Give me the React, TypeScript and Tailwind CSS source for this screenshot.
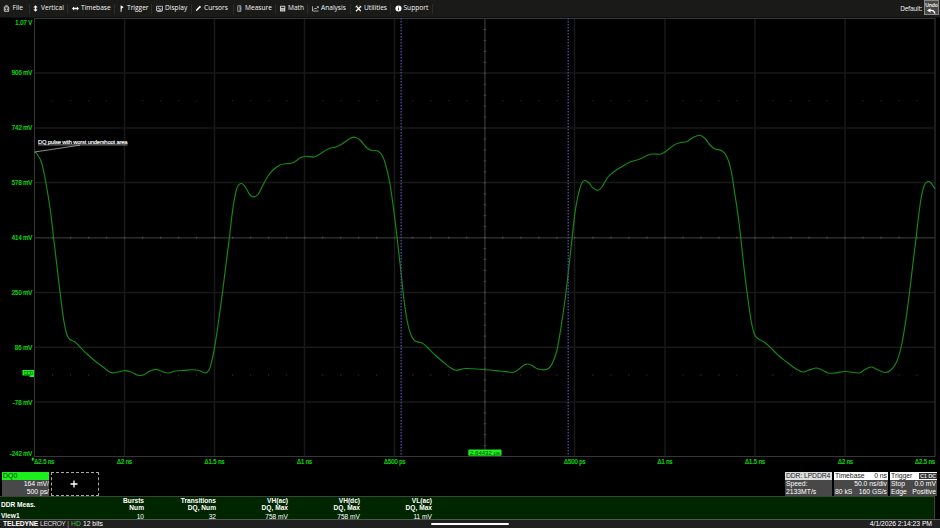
import type { ReactNode } from "react";

const menuItems = [
  { label: "File", width: "w-[30px]", pad: "pl-[3px]", gap: "gap-[2.5px]", icon: "file" },
  { label: "Vertical", width: "w-[38px]", pad: "pl-[2px]", gap: "gap-[2px]", icon: "vertical" },
  { label: "Timebase", width: "w-[47px]", pad: "pl-[4px]", gap: "gap-[2px]", icon: "timebase" },
  { label: "Trigger", width: "w-[37px]", pad: "pl-[3px]", gap: "gap-[2px]", icon: "trigger" },
  { label: "Display", width: "w-[40px]", pad: "pl-[4px]", gap: "gap-[2px]", icon: "display" },
  { label: "Cursors", width: "w-[42px]", pad: "pl-[3px]", gap: "gap-[2px]", icon: "cursors" },
  { label: "Measure", width: "w-[42px]", pad: "pl-[2px]", gap: "gap-[2px]", icon: "measure" },
  { label: "Math", width: "w-[32px]", pad: "pl-[3px]", gap: "gap-[2px]", icon: "math" },
  { label: "Analysis", width: "w-[43px]", pad: "pl-[4px]", gap: "gap-[2px]", icon: "analysis" },
  { label: "Utilities", width: "w-[40px]", pad: "pl-[4px]", gap: "gap-[2px]", icon: "utilities" },
  { label: "Support", width: "w-[42px]", pad: "pl-[3.5px]", gap: "gap-[2px]", icon: "support" },
];

const icons: Record<string, ReactNode> = {
  file: (
    <g fill="none" stroke="#ddd" strokeWidth="1">
      <path d="M1.5 2.2h5v5h-5z" />
      <path d="M2.5 1h3M3 4v2M5 4v2" />
    </g>
  ),
  vertical: <path fill="#fff" d="M4 .2 6.4 2.8H4.8v2.4h1.6L4 7.8 1.6 5.2h1.6V2.8H1.6z" />,
  timebase: <path fill="#fff" d="M0 4 2.4 1.7v1.5h3.2V1.7L8 4 5.6 6.3V4.8H2.4v1.5z" />,
  trigger: <path fill="#fff" d="M3 .6h1.1v7H3zM4 .6l2.3 1.9L4 4.2z" />,
  display: (
    <g fill="none" stroke="#ddd" strokeWidth=".9">
      <path d="M.6 1.5h6.8v5H.6z" />
      <path d="M2 4.6c.7-2 1.3-2 2 0s1.3 1 2-.8M1.5 7.5h5" />
    </g>
  ),
  cursors: <path fill="#fff" d="m.8 7.2 1-2.6L5.5.8l1.6 1.4L4.2 4.5l-.5 1.2z" />,
  measure: (
    <g fill="none" stroke="#ccc" strokeWidth=".8">
      <path d="M2 .9h3.6v6.4H2z" />
      <path d="M3.5 2.4h2M4.2 4h1.4M3.5 5.6h2" />
    </g>
  ),
  math: (
    <g>
      <rect x="1.1" y=".9" width="6.1" height="6.6" rx=".7" fill="#ccc" />
      <path d="M2.2 2h3.9v1.3H2.2z" fill="#222" />
      <path d="M2.3 4.8h3.6M2.3 6.1h3.6" stroke="#666" strokeWidth=".5" />
    </g>
  ),
  analysis: (
    <g fill="none" stroke="#ccc" strokeWidth=".9">
      <path d="M.6 1.5v5.4h6.8M1.8 5.2l1.6-1.6 1.3.9 2.4-2.4M5.5 1.9h1.8v1.7" />
    </g>
  ),
  utilities: (
    <g fill="none" stroke="#fff" strokeWidth="1.4">
      <path d="m1.2 1.1 5.4 6M6.9 1.3 1.1 7.2" />
      <path d="M.6 2.5 2.8.8M5.3 1l1.9 1.7" strokeWidth=".8" />
    </g>
  ),
  support: (
    <g>
      <circle cx="4" cy="4" r="3.5" fill="#fff" />
      <path d="M4 1.8v1M4 3.5v2.6" stroke="#222" strokeWidth="1" />
    </g>
  ),
};

const wave: [number, number][] = [
  [34.5, 152], [37, 154], [41, 161], [44, 173], [48, 195], [51, 215], [53.5, 237], [58, 275], [60.5, 296],
  [64, 322], [67, 335], [70, 339.5], [75, 342], [80, 347], [87, 354], [95, 361], [103, 367], [109, 371.5],
  [114, 372.8], [124, 370.7], [130, 371.5], [138, 375.3], [144, 374.8], [150, 371], [156, 369.4], [162, 371.5],
  [168, 373], [176, 371], [184, 370.4], [192, 369.8], [200, 370.7], [205, 373], [209, 370], [212, 360],
  [215, 345], [219, 318], [222.8, 290], [226.2, 263], [229.5, 237], [231.4, 220], [233.6, 204], [237, 188],
  [241.5, 183.5], [246, 188], [250, 195], [254, 196.8], [258, 194.5], [263, 185], [268, 176], [273, 170],
  [280, 165], [286, 163.8], [293, 162.8], [300, 158], [306, 156.3], [314, 157], [320, 154], [328, 149],
  [336, 147], [342, 144], [350, 138.5], [355, 137.2], [360, 140], [366, 147], [371, 150.3], [378, 151],
  [383, 157], [387, 170], [390, 184], [394, 212], [397, 237], [401, 272], [404, 300], [407, 320],
  [411, 335], [415, 341], [422, 343], [427, 347], [435, 355], [442, 361], [449, 366.7], [456, 370.3],
  [466, 368.5], [484, 369.5], [500, 371], [513, 372.3], [519, 369], [524, 365], [528, 364], [532, 365.5],
  [538, 369], [547, 369.3], [552, 364], [557, 350], [561.5, 324], [565.8, 294], [569, 266], [572.2, 237],
  [574.8, 214], [577.3, 199], [580, 188], [582.3, 182.2], [585, 180.5], [589, 183], [593, 188], [598, 190.3],
  [602, 187], [608, 177], [615, 171], [623, 166], [630, 162], [640, 159], [648, 155], [654, 154],
  [660, 154.2], [665, 152], [674, 145], [680, 142.7], [687, 141.5], [694, 137], [700, 135.3], [705, 138.5],
  [710, 145], [715, 149], [722, 150.7], [727, 157], [731, 170], [735, 195], [738.3, 217], [741, 240],
  [744, 268], [747, 292], [751, 320], [754, 333], [757, 338], [764, 342], [770, 347], [779, 356],
  [788, 363], [796, 369], [803, 372], [808, 370.5], [816, 368], [822, 370], [828, 373], [835, 373],
  [845, 371.5], [859, 373], [864, 370], [871, 367], [877, 369.5], [885, 372.5], [891, 370], [897, 361],
  [902, 343], [906, 319], [909.7, 291], [913, 263], [916.2, 237], [918.6, 216], [921, 199], [924, 186],
  [927.5, 181.5], [931, 183], [935, 189],
];

// Catmull-Rom through the samples, written as cubic segments
const toPath = (pts: [number, number][]) => {
  let d = `M${pts[0][0]} ${pts[0][1]}`;
  for (let i = 0; i < pts.length - 1; i++) {
    const p0 = pts[Math.max(i - 1, 0)];
    const p1 = pts[i];
    const p2 = pts[i + 1];
    const p3 = pts[Math.min(i + 2, pts.length - 1)];
    d += `C${p1[0] + (p2[0] - p0[0]) / 6} ${p1[1] + (p2[1] - p0[1]) / 6} ${p2[0] - (p3[0] - p1[0]) / 6} ${p2[1] - (p3[1] - p1[1]) / 6} ${p2[0]} ${p2[1]}`;
  }
  return d;
};

const columns = [124.5, 214.5, 304.5, 394.5, 574.5, 665, 755, 845];
const rows = [73, 128, 182.5, 292.5, 347.3, 402];
const ticksX = Array.from({ length: 49 }, (_, i) => 34.5 + (i + 1) * 18.01);
const ticksY = Array.from({ length: 39 }, (_, i) => 18.5 + (i + 1) * 10.95);

const yLabels = [
  { text: "1.07 V", y: 24.7, len: 17 },
  { text: "906 mV", y: 75.4, len: 20.5 },
  { text: "742 mV", y: 130.2, len: 20.5 },
  { text: "578 mV", y: 185.2, len: 20.5 },
  { text: "414 mV", y: 240, len: 20.5 },
  { text: "250 mV", y: 295, len: 20.5 },
  { text: "86 mV", y: 349.8, len: 17.5 },
  { text: "-78 mV", y: 404.7, len: 19.5 },
  { text: "-242 mV", y: 455.9, len: 22.5 },
];

const xLabels = [
  { text: "Δ2.5 ns", x: 34.3, len: 20 },
  { text: "Δ2 ns", x: 117, len: 15 },
  { text: "Δ1.5 ns", x: 204.5, len: 20 },
  { text: "Δ1 ns", x: 297, len: 15 },
  { text: "Δ500 ps", x: 384, len: 21.5 },
  { text: "Δ500 ps", x: 564, len: 21.5 },
  { text: "Δ1 ns", x: 657.5, len: 15 },
  { text: "Δ1.5 ns", x: 745, len: 20 },
  { text: "Δ2 ns", x: 838, len: 15 },
  { text: "Δ2.5 ns", x: 915, len: 20 },
];

const measures = [
  { title: "Bursts", sub: "Num", value: "10" },
  { title: "Transitions", sub: "DQ, Num", value: "32" },
  { title: "VH(ac)", sub: "DQ, Max", value: "758 mV" },
  { title: "VH(dc)", sub: "DQ, Max", value: "758 mV" },
  { title: "VL(ac)", sub: "DQ, Max", value: "11 mV" },
];

const MenuBar = () => (
  <header className="flex h-[17px] items-center justify-between bg-[#1a1a19] font-['Open_Sans',sans-serif] text-[6.6px] leading-none font-medium text-[#f4f4f4]">
    <nav className="flex h-full items-center">
      {menuItems.map((item) => (
        <div
          key={item.label}
          className={`flex h-[10px] shrink-0 items-center border-r border-[#2b2b2b] whitespace-nowrap ${item.width} ${item.pad} ${item.gap}`}
        >
          <svg viewBox="0 0 8 8" className="h-[7px] w-[7px] shrink-0">
            {icons[item.icon]}
          </svg>
          <span>{item.label}</span>
        </div>
      ))}
    </nav>
    <div className="flex h-full items-start gap-[2px] pr-px">
      <span className="pt-[6px] text-[6.5px] tracking-[-0.25px]">Default:</span>
      <div className="flex h-[15px] w-[15px] flex-col items-center border border-[#8a8a8a] bg-[#484848] pt-[2px]">
        <span className="text-[5px] leading-[5px] font-semibold tracking-[-0.1px] text-white">Undo</span>
        <svg viewBox="0 0 12 7" className="h-[7px] w-[11px]">
          <path d="M3 2.8h3.2q3 .2 3.8 3.8" fill="none" stroke="#fff" strokeWidth="1.5" />
          <path d="M.8 2.8 4.8.3v5z" fill="#fff" />
        </svg>
      </div>
    </div>
  </header>
);

const Waveform = () => (
  <svg viewBox="0 17 940 455" className="block h-[455px] w-full font-['Liberation_Sans',sans-serif]">
    <path d="M0 17.3H940" stroke="#0b1419" />
    <g stroke="#191919" strokeWidth="1.5">
      {columns.map((x) => (
        <path key={x} d={`M${x} 18.5V456.5`} />
      ))}
      {rows.map((y) => (
        <path key={y} d={`M34.5 ${y}H935`} />
      ))}
    </g>
    <path d="M34.5 237.7H935M484.9 18.5V456.5" stroke="#2c2c2c" strokeWidth="1.6" />
    <path d="M34.5 18.5H935V456.5H34.5z" fill="none" stroke="#363636" strokeWidth="1.1" />
    {ticksX.map((x, i) => (
      <g key={x} fill="#484848">
        <rect x={x - 0.6} y="236.7" width="1.3" height="2" />
        {(i + 1) % 5 !== 0 && (
          <g fill="#232323">
            <rect x={x - 0.6} y="100" width="1.2" height="1.2" />
            <rect x={x - 0.6} y="374.2" width="1.2" height="1.6" />
          </g>
        )}
      </g>
    ))}
    {ticksY.map((y) => (
      <rect key={y} x="483.7" y={y - 0.5} width="2.4" height="1.1" fill="#484848" />
    ))}
    <path d={toPath(wave)} fill="none" stroke="#168a16" strokeWidth="1.15" />
    <path d="M401.2 18V456.5M568.2 18V456.5" stroke="#4a4aa0" strokeWidth="1.4" strokeDasharray="1.5 1.5" />

    <path d="M34.5 152 80 145.2" stroke="#8c8c8c" />
    <path d="M38 144.9H127.5" stroke="#aaa" strokeWidth=".8" />
    <text x="38" y="143.8" fontSize="5.8" fill="#fff" stroke="#fff" strokeWidth=".15" textLength="89.5">
      DQ pulse with worst undershoot area
    </text>

    <g fill="#14e014" stroke="#14e014" strokeWidth=".2" fontSize="6.4">
      {yLabels.map((l) => (
        <text key={l.text} x={32.3 - l.len} y={l.y} textLength={l.len} lengthAdjust="spacingAndGlyphs">
          {l.text}
        </text>
      ))}
      {xLabels.map((l) => (
        <text key={l.x} x={l.x} y="463.8" textLength={l.len} lengthAdjust="spacingAndGlyphs">
          {l.text}
        </text>
      ))}
    </g>
    <path d="M31 459.5 33 457.3 34.5 459.5H33.4V460.7H32.2V459.5z" fill="#16f016" />

    <path d="M22.5 370H34V377H29.5V375.5H22.5z" fill="#1cf01c" />
    <text x="24" y="375" fontSize="5.5" fill="#075507" textLength="9">
      DQ0
    </text>
    <rect x="468.3" y="449.6" width="33.2" height="6.2" rx=".8" fill="#1cf01c" />
    <text x="470" y="455" fontSize="6" fill="#064006" textLength="30">
      2.64432 µs
    </text>
  </svg>
);

const Descriptors = () => (
  <section className="flex h-6 justify-between pr-[3px] pl-[2px] text-[6.8px] leading-[7.6px] text-white">
    <div className="flex gap-[2px]">
      <div className="w-[47px] bg-[#484848]">
        <div className="h-2 bg-[#1cf01c] pl-px text-[7px] leading-[8px] text-[#063c06]">DQ0</div>
        <div className="text-right">164 mV/</div>
        <div className="text-right">500 ps/</div>
      </div>
      <div className="flex h-6 w-[48px] items-center justify-center border border-dashed border-[#aaa] pr-[3px]">
        <svg viewBox="0 0 8 8" className="h-[8px] w-[8px]">
          <path d="M4 .5v7M.5 4h7" stroke="#fff" strokeWidth="1.3" />
        </svg>
      </div>
    </div>
    <div className="flex gap-[2px] whitespace-nowrap">
      <div className="w-[47px] bg-[#484848]">
        <div className="h-2 bg-[#dedede] px-px leading-[8px] tracking-[-0.1px] text-[#222]">DDR: LPDDR4</div>
        <div className="px-px">Speed:</div>
        <div className="px-px">2133MT/s</div>
      </div>
      <div className="w-[54px] bg-[#484848]">
        <div className="flex h-2 justify-between bg-white px-px leading-[8px] text-[#222]">
          <span>Timebase</span>
          <span>0 ns</span>
        </div>
        <div className="px-px text-right">50.0 ns/div</div>
        <div className="flex justify-between px-px">
          <span>80 kS</span>
          <span>160 GS/s</span>
        </div>
      </div>
      <div className="w-[47px] bg-[#484848]">
        <div className="flex h-2 justify-between bg-white pl-px leading-[8px] text-[#222]">
          <span>Trigger</span>
          <span className="my-px flex gap-[1.5px] bg-[#333] px-px text-[5.8px] leading-[6px] font-bold tracking-[-0.3px] text-[#ddd]">
            <span>C1</span>
            <span>DC</span>
          </span>
        </div>
        <div className="flex justify-between px-px">
          <span>Stop</span>
          <span>0.0 mV</span>
        </div>
        <div className="flex justify-between px-px">
          <span>Edge</span>
          <span>Positive</span>
        </div>
      </div>
    </div>
  </section>
);

const MeasureTable = () => (
  <section className="mr-[5px] flex h-[23px] border-t border-r border-[#3a443a] bg-[#002600] text-[6.6px] leading-[7.2px] text-white">
    <div className="flex w-[72px] flex-col pl-px font-bold">
      <span className="pt-[4px] leading-[8px]">DDR Meas.</span>
      <span className="pt-[3px]">View1</span>
    </div>
    {measures.map((m) => (
      <div key={m.title} className="flex w-[72px] flex-col text-right">
        <span className="font-bold">{m.title}</span>
        <span className="font-bold">{m.sub}</span>
        <span className="pt-[1.3px]">{m.value}</span>
      </div>
    ))}
  </section>
);

const StatusBar = () => (
  <footer className="grid h-[9px] grid-cols-3 items-center border-t border-[#555] bg-[#202020] text-[6.8px] leading-none whitespace-nowrap text-white">
    <div className="flex items-baseline pl-[3px]">
      <span className="font-bold tracking-[-0.15px]">TELEDYNE</span>
      <span className="ml-[2px] tracking-[-0.45px] text-[#ddd]">LECROY</span>
      <span className="mx-[2px] text-[#aaa]">|</span>
      <span className="text-[#3fc83f]">HD</span>
      <span className="ml-[2px]">12 bits</span>
    </div>
    <div className="mx-auto h-[2px] w-[78px] rounded-full bg-white" />
    <div className="pr-[8px] text-right tracking-[-0.05px]">4/1/2026 2:14:23 PM</div>
  </footer>
);

const App = () => {
  return (
    <div className="flex h-[528px] w-[940px] flex-col overflow-hidden bg-black font-['Liberation_Sans',Arial,sans-serif]">
      <MenuBar />
      <Waveform />
      <Descriptors />
      <MeasureTable />
      <StatusBar />
    </div>
  );
};

export default App;
